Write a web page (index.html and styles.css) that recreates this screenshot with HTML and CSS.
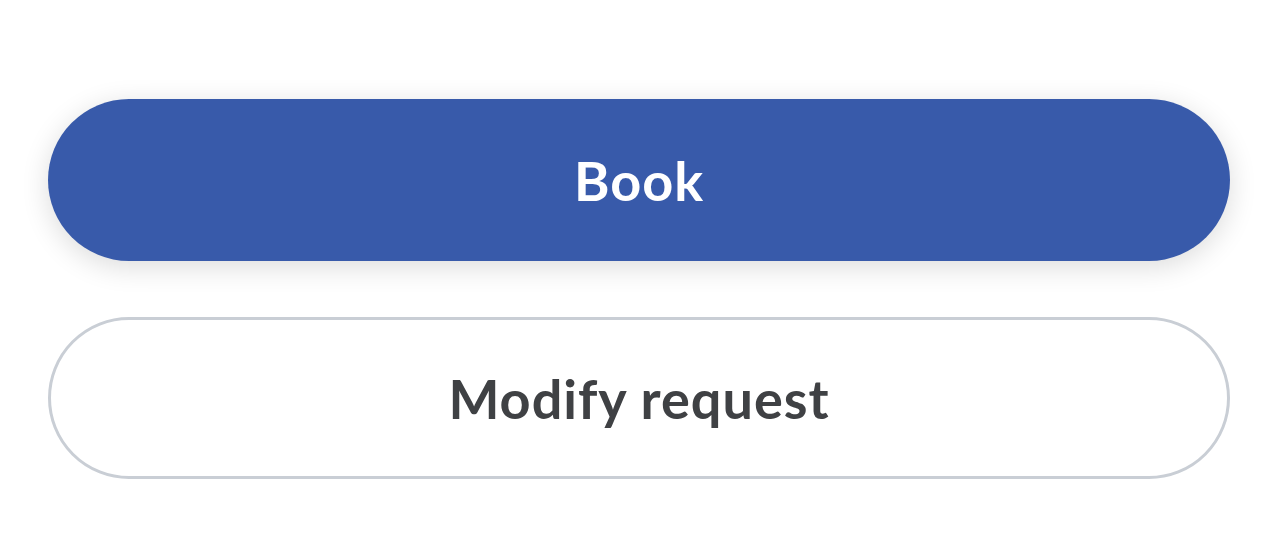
FILE: index.html
```html
<!DOCTYPE html>
<html lang="en">
<head>
  <meta charset="UTF-8" />
  <meta name="viewport" content="width=device-width, initial-scale=1.0" />
  <title>Booking request</title>
  <link rel="stylesheet" href="styles.css">
</head>
<body>
  <div class="actions">
    <button class="btn btn-primary">Book</button>
    <button class="btn btn-outline">Modify request</button>
  </div>
</body>
</html>
```

FILE: styles.css
```css
body {
  margin: 0;
  background: #ffffff;
  font-family: Lato, "Open Sans", sans-serif;
}
.actions {
  display: flex;
  flex-direction: column;
  gap: 56px;
  padding: 99px 54px 0 48px;
}
.btn {
  height: 162px;
  border-radius: 81px;
  font-family: Lato, "Open Sans", sans-serif;
  font-size: 54px;
  font-weight: 700;
  letter-spacing: 1px;
  cursor: pointer;
  box-sizing: border-box;
}
.btn-primary {
  background-color: #385aaa;
  color: #ffffff;
  border: none;
  box-shadow: 0 6px 28px rgba(0, 0, 0, 0.14);
}
.btn-outline {
  background-color: #ffffff;
  color: #3f4144;
  border: 3px solid #c9ced5;
}
```
